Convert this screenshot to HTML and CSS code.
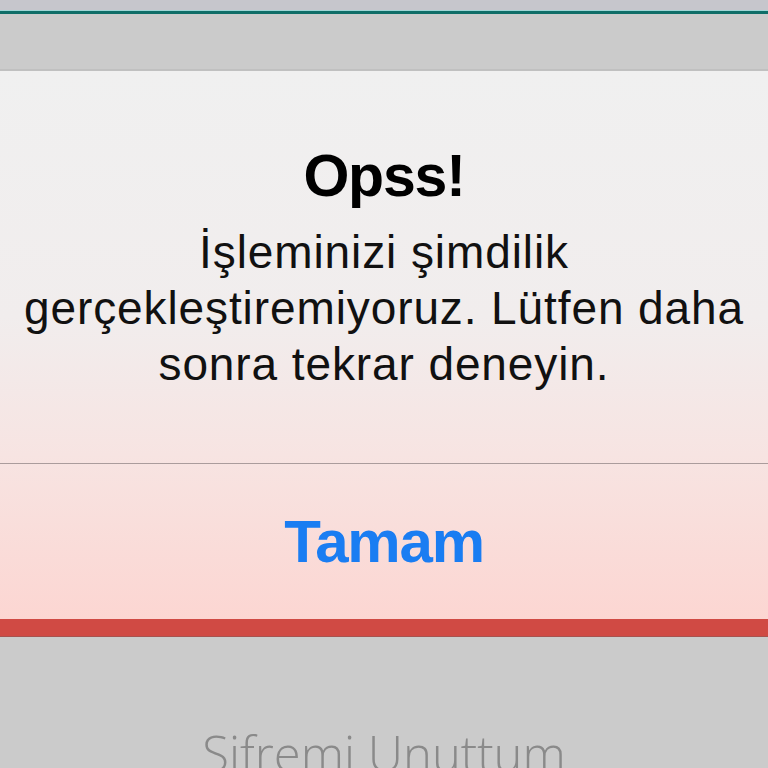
FILE: index.html
```html
<!DOCTYPE html>
<html lang="tr">
<head>
<meta charset="utf-8">
<link rel="stylesheet" href="styles.css">
</head>
<body>
<div class="screen">
  <div class="status"></div>
  <div class="accent"></div>
  <div class="navgap"></div>
  <div class="alert">
    <div class="alert-body">
      <h1 class="alert-title">Opss!</h1>
      <p class="alert-message">İşleminizi şimdilik gerçekleştiremiyoruz. Lütfen daha sonra tekrar deneyin.</p>
    </div>
    <div class="alert-action">Tamam</div>
  </div>
  <div class="redbar"></div>
  <div class="below">
    <div class="forgot">Sifremi Unuttum</div>
  </div>
</div>
</body>
</html>
```
FILE: styles.css
```css
html, body {
  margin: 0;
  padding: 0;
}
body {
  width: 768px;
  height: 768px;
  overflow: hidden;
  background: #cbcbcb;
  font-family: "Liberation Sans", Arial, sans-serif;
}
.screen {
  display: flex;
  flex-direction: column;
  height: 768px;
}
.screen > div {
  flex-shrink: 0;
}
.status {
  height: 10px;
  background: #c6c6cc;
}
.accent {
  height: 3px;
  border-top: 1px solid #9fd6d6;
  background: #0f6e68;
}
.navgap {
  height: 55px;
  background: #cbcbcb;
  border-bottom: 2px solid #c0c0c0;
}
.alert {
  height: 548px;
  display: flex;
  flex-direction: column;
  background: linear-gradient(to bottom, #f0f0f0 0%, #f1eded 45%, #f7e4e2 70%, #fcd6d2 100%);
}
.alert-body {
  height: 393px;
  box-sizing: border-box;
  padding-top: 70px;
  text-align: center;
  border-bottom: 1px solid #aa9c9c;
}
.alert-title {
  margin: 0;
  font-size: 59px;
  line-height: 70px;
  font-weight: 700;
  letter-spacing: -1.2px;
  color: #000;
}
.alert-message {
  margin: 13px 0 0;
  font-size: 46px;
  line-height: 56px;
  letter-spacing: 0.9px;
  color: #111;
  padding: 0 10px;
}
.alert-action {
  flex: 1;
  display: flex;
  align-items: center;
  justify-content: center;
  font-size: 60px;
  line-height: 1;
  font-weight: 700;
  letter-spacing: -1.2px;
  color: #1a7df2;
}
.redbar {
  height: 17px;
  background: #d04a44;
  border-bottom: 1px solid #a8524e;
}
.screen > .below {
  flex: 1 1 auto;
  min-height: 0;
  overflow: hidden;
  background: #cbcbcb;
  text-align: center;
}
.forgot {
  padding-top: 86px;
  font-family: "Open Sans", "Liberation Sans", sans-serif;
  font-weight: 300;
  font-size: 49px;
  line-height: 60px;
  color: #8a8a8a;
}
```
